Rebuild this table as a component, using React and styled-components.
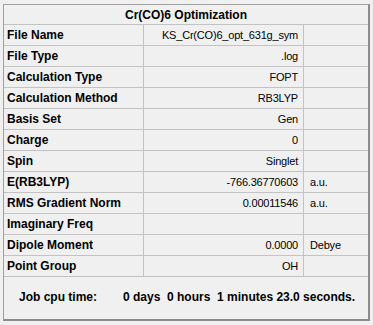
import React from "react";
import styled, { createGlobalStyle } from "styled-components";

const GlobalStyle = createGlobalStyle`
  html, body {
    margin: 0;
    padding: 0;
    background: #f0f0f0;
  }
  body {
    font-family: "Liberation Sans", Arial, sans-serif;
    font-size: 11px;
    color: #000;
  }
`;

const Page = styled.div`
  padding: 4px 0 0 3px;
`;

const Frame = styled.div`
  width: 364px;
  border-left: 1px solid #a0a0a0;
  border-top: 1px solid #a0a0a0;
  border-right: 2px solid #8c8c8c;
  border-bottom: 2px solid #8c8c8c;
  background: #f0f0f0;
`;

const Grid = styled.div`
  display: grid;
  grid-template-columns: 139px 159px 64px;
  gap: 1px;
  background: #c3c3c3;
`;

const Title = styled.div`
  grid-column: 1 / -1;
  background: #f0f0f0;
  display: flex;
  align-items: center;
  justify-content: center;
  font-weight: bold;
  font-size: 12px;
`;

const Label = styled.div`
  background: #f0f0f0;
  display: flex;
  align-items: center;
  white-space: nowrap;
  padding-left: 3px;
  font-weight: bold;
  font-size: 12px;
`;

const Value = styled.div`
  background: #f0f0f0;
  display: flex;
  align-items: center;
  justify-content: flex-end;
  white-space: nowrap;
  padding-right: 5px;
  letter-spacing: -0.2px;
`;

const Unit = styled.div`
  background: #f0f0f0;
  display: flex;
  align-items: center;
  white-space: nowrap;
  padding-left: 6px;
  letter-spacing: -0.2px;
`;

const Footer = styled.div`
  grid-column: 1 / -1;
  background: #f0f0f0;
  display: flex;
  align-items: center;
  padding: 0 0 2px 15px;
  font-weight: bold;
  font-size: 12px;
  white-space: pre;
`;

const FooterLabel = styled.span`
  width: 104px;
`;

const rows = [
  ["File Name", "KS_Cr(CO)6_opt_631g_sym", ""],
  ["File Type", ".log", ""],
  ["Calculation Type", "FOPT", ""],
  ["Calculation Method", "RB3LYP", ""],
  ["Basis Set", "Gen", ""],
  ["Charge", "0", ""],
  ["Spin", "Singlet", ""],
  ["E(RB3LYP)", "-766.36770603", "a.u."],
  ["RMS Gradient Norm", "0.00011546", "a.u."],
  ["Imaginary Freq", "", ""],
  ["Dipole Moment", "0.0000", "Debye"],
  ["Point Group", "OH", ""],
];

export default function App() {
  return (
    <Page>
      <GlobalStyle />
      <Frame>
        <Grid style={{ gridTemplateRows: `19px repeat(${rows.length}, 20px) 42px` }}>
          <Title>Cr(CO)6 Optimization</Title>
          {rows.map(([label, value, unit]) => (
            <React.Fragment key={label}>
              <Label>{label}</Label>
              <Value>{value}</Value>
              <Unit>{unit}</Unit>
            </React.Fragment>
          ))}
          <Footer>
            <FooterLabel>Job cpu time:</FooterLabel>
            <span>0 days  0 hours  1 minutes 23.0 seconds.</span>
          </Footer>
        </Grid>
      </Frame>
    </Page>
  );
}
